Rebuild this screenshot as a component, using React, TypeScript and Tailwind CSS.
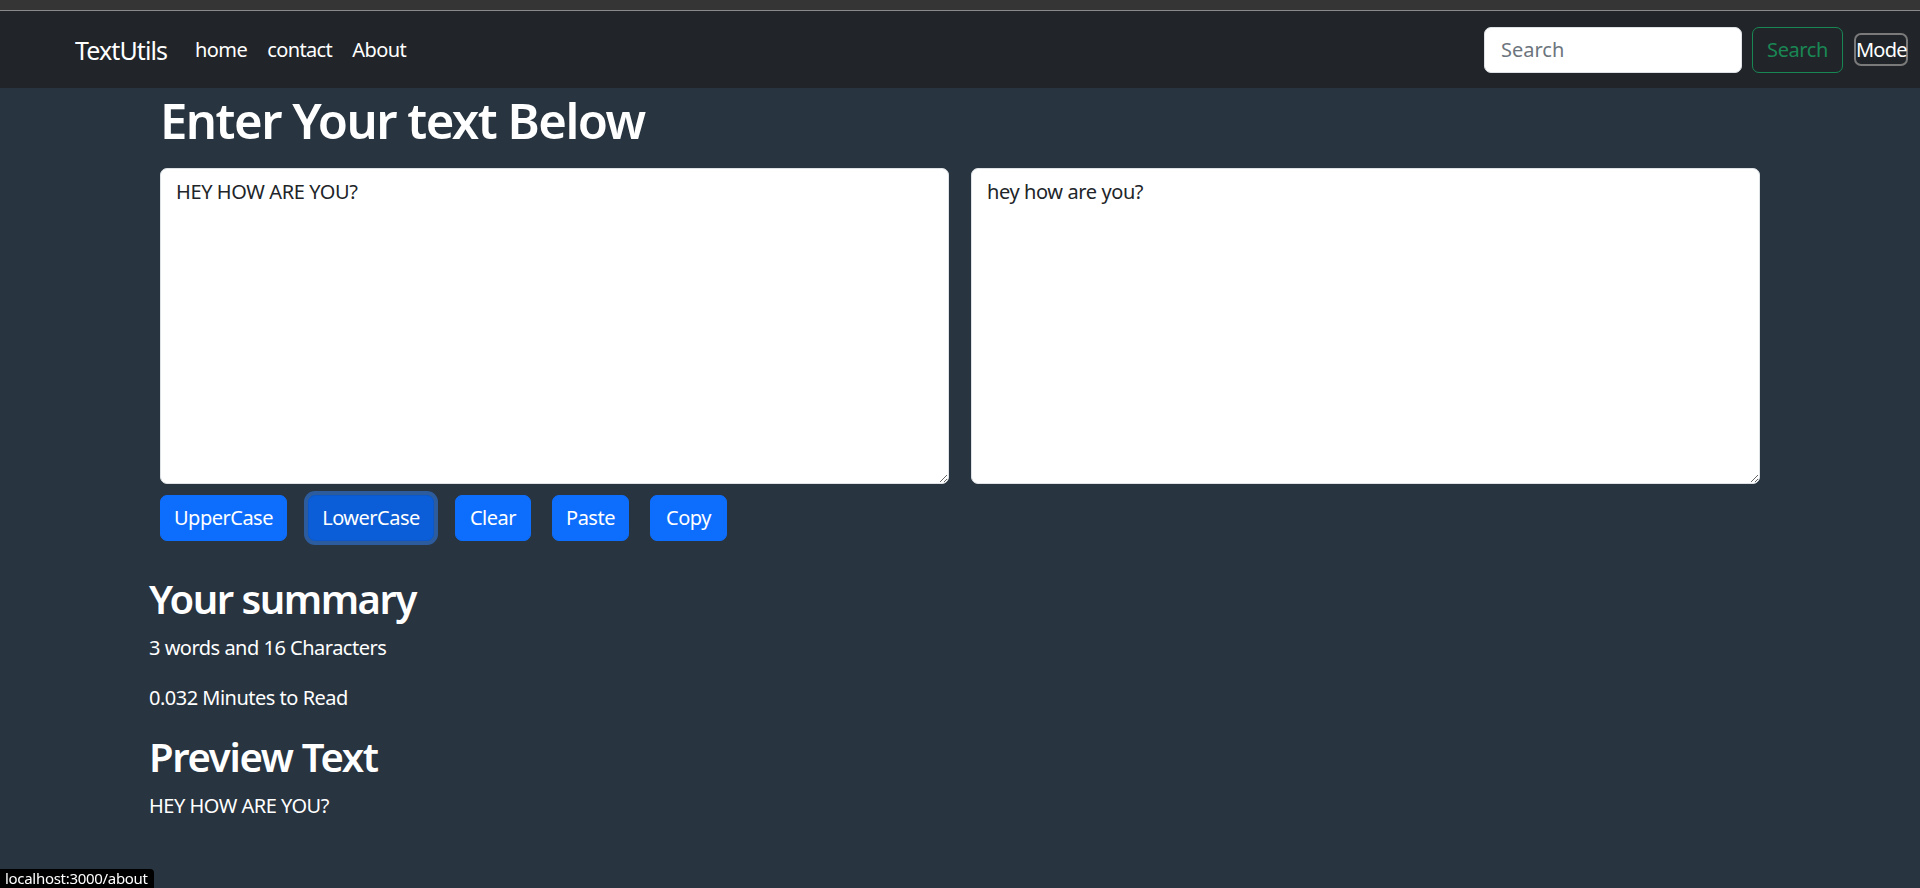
import React, { useState } from "react";

export default function App() {
  const [text, setText] = useState("HEY HOW ARE YOU?");
  const [lower, setLower] = useState("hey how are you?");

  // boutons d'action sous les zones de texte
  const actions = [
    { label: "UpperCase", w: "w-[127px]", focus: false },
    { label: "LowerCase", w: "w-[126px]", focus: true },
    { label: "Clear", w: "w-[76px]", focus: false },
    { label: "Paste", w: "w-[77px]", focus: false },
    { label: "Copy", w: "w-[77px]", focus: false },
  ];

  return (
    <div className="min-h-screen bg-[#28343f] font-['Noto_Sans','Open_Sans',sans-serif] text-white">
      <div className="h-[10px] bg-[#353535]" />
      <div className="h-px bg-[#8a8a8a]" />

      <nav className="flex h-[77px] items-center bg-[#212529] pl-[75px] pr-[12px]">
        <a href="#" className="mr-[18px] text-[25px] leading-[30px] tracking-[-0.9px] text-white">
          TextUtils
        </a>
        <ul className="flex items-center">
          <li>
            <a href="#" className="px-[10px] text-[20px] tracking-[-0.6px] text-white">
              home
            </a>
          </li>
          <li>
            <a href="#" className="px-[10px] text-[20px] tracking-[-0.6px] text-white">
              contact
            </a>
          </li>
          <li>
            <a href="#" className="px-[10px] text-[20px] tracking-[-0.6px] text-white">
              About
            </a>
          </li>
        </ul>

        <form className="ml-auto flex items-center" onSubmit={(e) => e.preventDefault()}>
          <input
            type="search"
            placeholder="Search"
            className="h-[46px] w-[258px] rounded-[7px] border border-[#dee2e6] bg-white px-[16px] text-[20px] text-[#212529] placeholder-[#6c757d] outline-none"
          />
          <button
            type="submit"
            className="ml-[10px] h-[46px] w-[91px] rounded-[7px] border border-[#198754] text-[20px] tracking-[-0.4px] text-[#198754]"
          >
            Search
          </button>
        </form>
        <button className="ml-[11px] h-[33px] w-[54px] rounded-[7px] border-2 border-[#7a7a7a] text-[20px] leading-[26px] tracking-[-0.8px] text-white">
          Mode
        </button>
      </nav>

      <div className="mx-auto w-[1622px]">
        <div className="px-[11px]">
          <h1 className="mt-[2px] mb-[18px] text-[49px] leading-[60px] font-semibold tracking-[-1.5px]">
            Enter Your text Below
          </h1>
          <div className="flex gap-[22px]">
            <textarea
              value={text}
              onChange={(e) => setText(e.target.value)}
              className="h-[316px] flex-1 rounded-[7px] border border-[#dee2e6] bg-white px-[15px] py-[8px] text-[20px] leading-[30px] tracking-[-0.4px] text-[#212529] outline-none"
            />
            <textarea
              value={lower}
              onChange={(e) => setLower(e.target.value)}
              className="h-[316px] flex-1 rounded-[7px] border border-[#dee2e6] bg-white px-[15px] py-[8px] text-[20px] leading-[30px] tracking-[-0.4px] text-[#212529] outline-none"
            />
          </div>
          <div className="mt-[11px] flex gap-[21px]">
            {actions.map((a) => (
              <button
                key={a.label}
                className={
                  a.focus
                    ? `${a.w} h-[46px] rounded-[7px] border border-[#0a58ca] bg-[#0b5ed7] text-[20px] tracking-[-0.5px] text-white shadow-[0_0_0_4px_rgba(49,132,253,0.5)]`
                    : `${a.w} h-[46px] rounded-[7px] border border-[#0d6efd] bg-[#0d6efd] text-[20px] tracking-[-0.5px] text-white`
                }
                onClick={() => {
                  if (a.label === "LowerCase") setLower(text.toLowerCase());
                  if (a.label === "UpperCase") setText(text.toUpperCase());
                  if (a.label === "Clear") setText("");
                }}
              >
                {a.label}
              </button>
            ))}
          </div>
        </div>

        <div className="mt-[34px]">
          <h2 className="mb-[10px] text-[40px] leading-[48px] font-semibold tracking-[-1.5px]">Your summary</h2>
          <p className="mb-[20px] text-[20px] leading-[30px] tracking-[-0.5px]">3 words and 16 Characters</p>
          <p className="mb-[20px] text-[20px] leading-[30px] tracking-[-0.5px]">0.032 Minutes to Read</p>
          <h2 className="mb-[10px] text-[40px] leading-[48px] font-semibold tracking-[-1.3px]">Preview Text</h2>
          <p className="text-[20px] leading-[30px] tracking-[-0.5px]">{text}</p>
        </div>
      </div>

      <div className="fixed bottom-0 left-0 h-[19px] w-[154px] rounded-tr-[4px] bg-black pl-[5px] text-[15px] leading-[19px] tracking-[-0.3px] text-white">
        localhost:3000/about
      </div>
    </div>
  );
}
